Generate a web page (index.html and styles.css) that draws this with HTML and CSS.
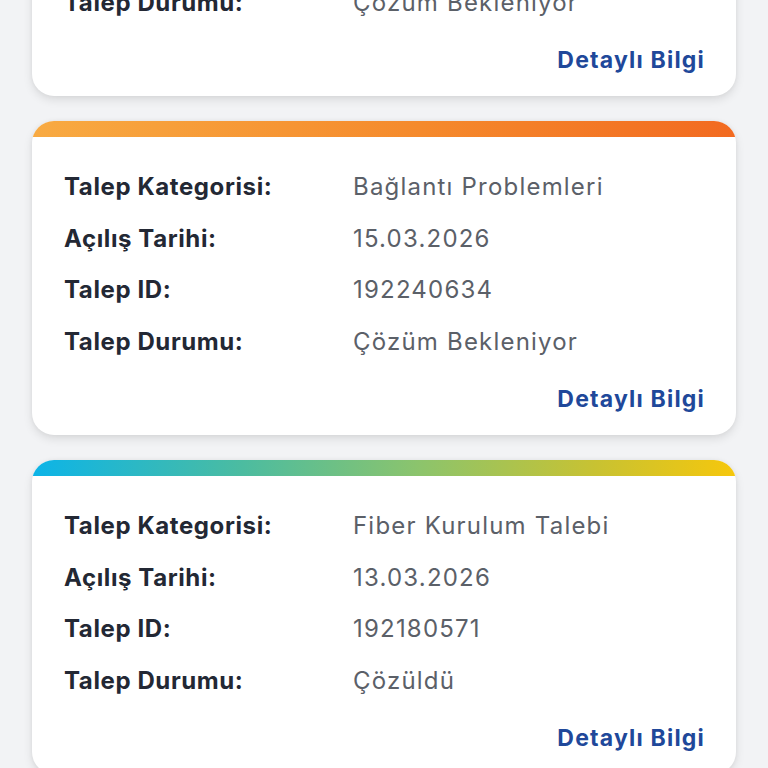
FILE: index.html
```html
<!DOCTYPE html>
<html lang="tr">
<head>
<meta charset="utf-8">
<link rel="stylesheet" href="styles.css">
</head>
<body>
<main class="list">
  <section class="card">
    <div class="bar bar-blue"></div>
    <div class="body">
      <div class="row"><span class="label">Talep Kategorisi:</span><span class="value">Bağlantı Problemleri</span></div>
      <div class="row"><span class="label">Açılış Tarihi:</span><span class="value">17.03.2026</span></div>
      <div class="row"><span class="label">Talep ID:</span><span class="value">192301247</span></div>
      <div class="row"><span class="label">Talep Durumu:</span><span class="value">Çözüm Bekleniyor</span></div>
      <div class="more"><a class="link">Detaylı Bilgi</a></div>
    </div>
  </section>
  <section class="card">
    <div class="bar bar-orange"></div>
    <div class="body">
      <div class="row"><span class="label">Talep Kategorisi:</span><span class="value">Bağlantı Problemleri</span></div>
      <div class="row"><span class="label">Açılış Tarihi:</span><span class="value">15.03.2026</span></div>
      <div class="row"><span class="label">Talep ID:</span><span class="value">192240634</span></div>
      <div class="row"><span class="label">Talep Durumu:</span><span class="value">Çözüm Bekleniyor</span></div>
      <div class="more"><a class="link">Detaylı Bilgi</a></div>
    </div>
  </section>
  <section class="card">
    <div class="bar bar-rainbow"></div>
    <div class="body">
      <div class="row"><span class="label">Talep Kategorisi:</span><span class="value">Fiber Kurulum Talebi</span></div>
      <div class="row"><span class="label">Açılış Tarihi:</span><span class="value">13.03.2026</span></div>
      <div class="row"><span class="label">Talep ID:</span><span class="value">192180571</span></div>
      <div class="row"><span class="label">Talep Durumu:</span><span class="value">Çözüldü</span></div>
      <div class="more"><a class="link">Detaylı Bilgi</a></div>
    </div>
  </section>
</main>
</body>
</html>
```
FILE: styles.css
```css
html, body {
  margin: 0;
  padding: 0;
  background: #f2f3f5;
  height: 768px;
  overflow: hidden;
}
body {
  font-family: "Inter", "Noto Sans", sans-serif;
}
.list {
  display: flex;
  flex-direction: column;
  gap: 25px;
  padding: 0 32px;
  margin-top: -218px;
}
.card {
  background: #ffffff;
  border-radius: 22px;
  box-shadow: 0 4px 10px rgba(0, 0, 0, 0.10), 0 0 4px rgba(0, 0, 0, 0.05);
  overflow: hidden;
  height: 314px;
  display: flex;
  flex-direction: column;
}
.bar {
  height: 16px;
  flex: none;
}
.bar-orange {
  background: linear-gradient(90deg, #f8aa42 0%, #f58a2c 55%, #f26a20 100%);
}
.bar-rainbow {
  background: linear-gradient(90deg, #0cb4e8 0%, #4cbca0 30%, #8cc46c 55%, #c8c232 80%, #f6c70c 100%);
}
.bar-blue {
  background: linear-gradient(90deg, #0cb4e8 0%, #1e63c8 100%);
}
.body {
  padding: 24px 32px 21px 32px;
}
.row {
  display: grid;
  grid-template-columns: 289px 1fr;
  height: 51.5px;
  align-items: center;
}
.label {
  font-size: 24px;
  font-weight: 700;
  color: #232834;
  letter-spacing: 0.6px;
}
.value {
  font-size: 24px;
  color: #5b6068;
  font-weight: 400;
  letter-spacing: 1.2px;
}
.more {
  display: flex;
  justify-content: flex-end;
  margin-top: 17px;
  height: 30px;
  align-items: center;
}
.link {
  color: #20489a;
  font-weight: 700;
  font-size: 23px;
  letter-spacing: 1.2px;
  margin-right: -1px;
}
```
